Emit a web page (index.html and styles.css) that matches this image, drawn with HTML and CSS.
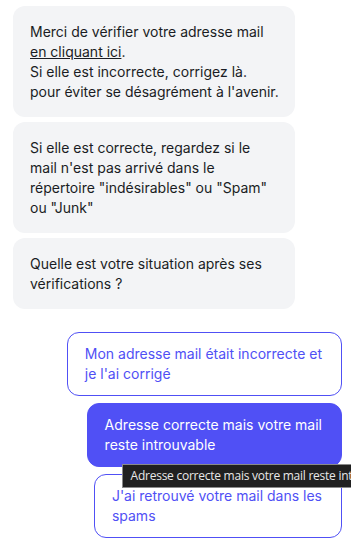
FILE: index.html
```html
<!DOCTYPE html>
<html>
<head>
  <title>Vérification de l'adresse mail</title>
  <link rel="stylesheet" href="styles.css">
</head>
<body>
  <div class="chat">
    <div class="messages">
      <div class="bubble">
        Merci de vérifier votre adresse mail<br>
        <a href="#" class="link">en cliquant ici</a>.<br>
        Si elle est incorrecte, corrigez là.<br>
        pour éviter se désagrément à l'avenir.
      </div>
      <div class="bubble">
        Si elle est correcte, regardez si le<br>
        mail n'est pas arrivé dans le<br>
        répertoire "indésirables" ou "Spam"<br>
        ou "Junk"
      </div>
      <div class="bubble">
        Quelle est votre situation après ses<br>
        vérifications ?
      </div>
    </div>

    <div class="choices">
      <button class="choice">Mon adresse mail était incorrecte et<br>je l'ai corrigé</button>
      <div class="choice-wrap">
        <button class="choice active">Adresse correcte mais votre mail<br>reste introuvable</button>
        <div class="tooltip">Adresse correcte mais votre mail reste introuvable</div>
      </div>
      <button class="choice">J'ai retrouvé votre mail dans les<br>spams</button>
    </div>
  </div>
</body>
</html>
```

FILE: styles.css
```css
:root {
  --text-color: #1a1d24;
  --bubble-bg: #f3f4f6;
  --accent: #5050f5;
}

body {
  margin: 0;
  font-family: Inter, 'Noto Sans', sans-serif;
  font-size: 14px;
  line-height: 20px;
  color: var(--text-color);
  background: #ffffff;
  overflow: hidden;
}

.chat {
  padding: 6px 9px 0 13px;
}

.messages {
  display: flex;
  flex-direction: column;
  gap: 5px;
}

.bubble {
  width: 282px;
  box-sizing: border-box;
  padding: 16px 12px 15px 17px;
  background-color: var(--bubble-bg);
  border-radius: 12px;
  white-space: nowrap;
}

.link {
  color: var(--text-color);
  text-decoration: underline;
}

.choices {
  display: flex;
  flex-direction: column;
  align-items: flex-end;
  gap: 7px;
  margin-top: 23px;
}

.choice-wrap {
  position: relative;
  display: flex;
  justify-content: flex-end;
}

.choice {
  font-family: inherit;
  font-size: 14px;
  line-height: 20px;
  text-align: left;
  color: var(--accent);
  background-color: #ffffff;
  border: 1px solid var(--accent);
  border-radius: 12px;
  padding: 11px 19px 11px 17px;
  white-space: nowrap;
  cursor: pointer;
}

.choice.active {
  color: #ffffff;
  background-color: var(--accent);
}

.tooltip {
  position: absolute;
  top: 61px;
  left: 35px;
  z-index: 2;
  padding: 3px 8px 4px 8px;
  background-color: #202020;
  border: 1px solid #8a8a8a;
  color: #e8e8e8;
  font-family: 'Open Sans', sans-serif;
  font-size: 12px;
  letter-spacing: -0.25px;
  line-height: 15px;
  white-space: nowrap;
}
```
